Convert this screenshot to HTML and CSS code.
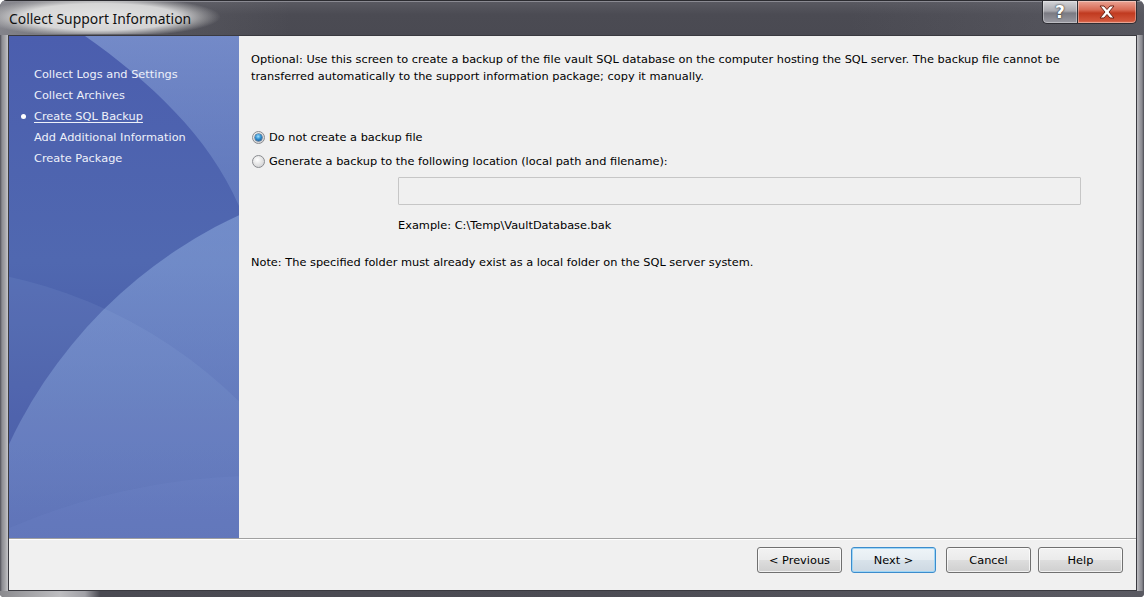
FILE: index.html
```html
<!DOCTYPE html>
<html>
<head>
<meta charset="utf-8">
<link rel="stylesheet" href="styles.css">
</head>
<body>
<div class="window">
  <div class="titlebar">
    <div class="title-glow"><span class="title">Collect Support Information</span></div>
    <div class="caption-buttons">
      <div class="cap-btn cap-help"><span>?</span></div>
      <div class="cap-btn cap-close">
        <svg width="22" height="16" viewBox="0 0 22 16"><path d="M4 2 L8 2 L11 5.5 L14 2 L18 2 L13 8 L18 14 L14 14 L11 10.5 L8 14 L4 14 L9 8 Z" fill="#ffffff" stroke="#6b2418" stroke-width="1" stroke-linejoin="round"/></svg>
      </div>
    </div>
  </div>
  <div class="frame-mid">
    <div class="frame-left"></div>
    <div class="client">
      <div class="main">
        <div class="sidebar">
          <svg class="sidebar-art" width="230" height="502" viewBox="0 0 230 502" preserveAspectRatio="none">
            <defs>
              <linearGradient id="base" x1="0" y1="0" x2="0" y2="1">
                <stop offset="0" stop-color="#4b5eae"/>
                <stop offset="0.45" stop-color="#5068b0"/>
                <stop offset="1" stop-color="#3e4d9d"/>
              </linearGradient>
              <linearGradient id="bigc" x1="0" y1="0" x2="0" y2="1">
                <stop offset="0" stop-color="#9ab8e6" stop-opacity="0.5"/>
                <stop offset="0.6" stop-color="#7f9ad8" stop-opacity="0.25"/>
                <stop offset="1" stop-color="#6f86cc" stop-opacity="0.05"/>
              </linearGradient>
              <linearGradient id="topr" x1="0" y1="0" x2="0" y2="1">
                <stop offset="0" stop-color="#9cb6e2" stop-opacity="0.5"/>
                <stop offset="1" stop-color="#8aa6da" stop-opacity="0.3"/>
              </linearGradient>
            </defs>
            <rect width="230" height="502" fill="url(#base)"/>
            <path d="M76 0 C 140 45, 200 100, 230 170 L 230 0 Z" fill="url(#topr)"/>
            <circle cx="430" cy="610" r="475" fill="url(#bigc)"/>
            <circle cx="-100" cy="700" r="470" fill="#a8c0ee" fill-opacity="0.10"/>
            <path d="M0 492 Q 110 445 230 440 L230 502 L0 502 Z" fill="#8ea4e0" fill-opacity="0.08"/>
          </svg>
          <ul class="nav">
            <li>Collect Logs and Settings</li>
            <li>Collect Archives</li>
            <li class="current">Create SQL Backup</li>
            <li>Add Additional Information</li>
            <li>Create Package</li>
          </ul>
        </div>
        <div class="content">
          <p class="intro">Optional: Use this screen to create a backup of the file vault SQL database on the computer hosting the SQL server. The backup file cannot be transferred automatically to the support information package; copy it manually.</p>
          <div class="options">
            <div class="radio-row"><span class="radio checked"></span><span>Do not create a backup file</span></div>
            <div class="radio-row"><span class="radio"></span><span>Generate a backup to the following location (local path and filename):</span></div>
          </div>
          <div class="path-block">
            <div class="path-input"></div>
            <div class="example">Example: C:\Temp\VaultDatabase.bak</div>
          </div>
          <p class="note">Note: The specified folder must already exist as a local folder on the SQL server system.</p>
        </div>
      </div>
      <div class="button-bar">
        <div class="btn">&lt; Previous</div>
        <div class="btn btn-default">Next &gt;</div>
        <div class="btn btn-cancel">Cancel</div>
        <div class="btn">Help</div>
      </div>
    </div>
    <div class="frame-right"></div>
  </div>
  <div class="frame-bottom"></div>
</div>
</body>
</html>
```
FILE: styles.css
```css
html, body {
  margin: 0;
  padding: 0;
  background: #ffffff;
}
.window {
  width: 1144px;
  height: 597px;
  display: flex;
  flex-direction: column;
  overflow: hidden;
  border-radius: 7px 7px 4px 4px;
  background: #4d4d56;
  font-family: "DejaVu Sans", sans-serif;
  font-size: 11.35px;
  color: #000;
}
.titlebar {
  height: 35px;
  flex: none;
  display: flex;
  justify-content: space-between;
  align-items: flex-start;
  box-sizing: border-box;
  border-top: 1px solid #2b2b30;
  background:
    linear-gradient(90deg, rgba(170,170,176,0.6) 0px, rgba(120,120,126,0.25) 160px, rgba(0,0,0,0) 290px, rgba(0,0,0,0) 850px, rgba(110,110,118,0.35) 1144px),
    linear-gradient(180deg, #5a5a62 0%, #4b4b53 40%, #4a4a52 100%);
  box-shadow: inset 0 1px 0 #8a8a92;
}
.title-glow {
  padding: 8px 49px 0 9px;
  height: 33px;
  box-sizing: border-box;
  background: radial-gradient(ellipse 50% 62% at 42% 48%, rgba(232,232,232,0.97) 0%, rgba(224,224,224,0.9) 65%, rgba(200,200,200,0.45) 85%, rgba(200,200,200,0) 100%);
}
.title {
  font-family: "Noto Sans", "DejaVu Sans", sans-serif;
  font-size: 13.9px;
  color: #111;
  white-space: nowrap;
}
.caption-buttons {
  display: flex;
  margin-right: 7px;
}
.cap-btn {
  height: 23px;
  box-sizing: border-box;
  border: 1px solid #2e2e34;
  border-top: none;
  display: flex;
  align-items: center;
  justify-content: center;
  box-shadow: inset 0 0 0 1px rgba(255,255,255,0.35);
}
.cap-help {
  width: 35px;
  border-radius: 0 0 0 5px;
  background: linear-gradient(180deg, #d4d4d8 0%, #a8a8ae 45%, #7a7a82 55%, #9a9aa2 100%);
  border-right: none;
}
.cap-help span {
  font-family: "DejaVu Sans", sans-serif;
  font-weight: bold;
  font-size: 17px;
  color: #fff;
  text-shadow: 0 0 1px #333, 0 0 2px #333;
  line-height: 1;
}
.cap-close {
  width: 60px;
  border-radius: 0 0 5px 0;
  background: linear-gradient(180deg, #eba495 0%, #d86a54 40%, #c03a20 55%, #d2553a 90%, #e07a60 100%);
}
.frame-mid {
  flex: 1;
  display: flex;
  min-height: 0;
}
.frame-left {
  width: 8px;
  flex: none;
  background: linear-gradient(90deg, #505058 0px, #8c8c92 2px, #a4a4a8 5px, #c4c4c8 8px);
}
.frame-right {
  width: 7px;
  flex: none;
  background: linear-gradient(90deg, #c0c0c4 0px, #9a9aa0 3px, #8a8a90 5px, #4a4a52 7px);
}
.frame-bottom {
  height: 6px;
  flex: none;
  background: linear-gradient(90deg, #8a8a8e 0px, #bdbdc0 60px, #a0a0a6 85px, #4a4a52 100px, #4c4c54 600px, #5a5a62 1144px);
}
.client {
  flex: 1;
  display: flex;
  flex-direction: column;
  border: 1px solid #3a3a40;
  background: #f0f0f0;
  min-width: 0;
}
.main {
  flex: 1;
  display: flex;
  min-height: 0;
}
.sidebar {
  width: 230px;
  flex: none;
  position: relative;
  overflow: hidden;
}
.sidebar-art {
  position: absolute;
  left: 0;
  top: 0;
  display: block;
}
.nav {
  position: relative;
  list-style: none;
  margin: 0;
  padding: 28px 0 0 25px;
  color: #eef1fa;
  line-height: 21px;
}
.nav li {
  position: relative;
  white-space: nowrap;
}
.nav li.current {
  text-decoration: underline;
  text-underline-offset: 2px;
}
.nav li.current::before {
  content: "";
  position: absolute;
  left: -13px;
  top: 8px;
  width: 5px;
  height: 5px;
  border-radius: 50%;
  background: #ffffff;
}
.content {
  flex: 1;
  padding: 15px 12px 0 12px;
  min-width: 0;
}
.intro {
  margin: 0;
  line-height: 17px;
  max-width: 850px;
}
.options {
  margin-top: 40px;
  display: flex;
  flex-direction: column;
}
.radio-row {
  height: 24px;
  display: flex;
  align-items: center;
  gap: 4px;
  white-space: nowrap;
}
.radio {
  width: 13px;
  height: 13px;
  flex: none;
  box-sizing: border-box;
  border-radius: 50%;
  border: 1px solid #8a8c90;
  background: radial-gradient(circle at 40% 35%, #ffffff 0%, #e6e6e6 45%, #c8c8cc 100%);
  position: relative;
  margin-left: 1px;
}
.radio.checked::after {
  content: "";
  position: absolute;
  left: 2px;
  top: 2px;
  width: 7px;
  height: 7px;
  border-radius: 50%;
  background: radial-gradient(circle at 45% 35%, #9fe0ff 0%, #2f8fd0 45%, #0d3f7a 100%);
  box-shadow: 0 0 0 0.5px #123e6a;
}
.path-block {
  padding-left: 147px;
}
.path-input {
  width: 683px;
  height: 28px;
  box-sizing: border-box;
  margin-top: 4px;
  border: 1px solid #c6c6c6;
  border-radius: 1px;
  background: #f0f0f0;
}
.example {
  margin-top: 12px;
  line-height: 17px;
}
.note {
  margin: 20px 0 0 0;
  line-height: 17px;
}
.button-bar {
  flex: none;
  border-top: 1px solid #a0a0a0;
  box-shadow: inset 0 1px 0 #ffffff;
  display: flex;
  justify-content: flex-end;
  align-items: flex-start;
  padding: 8px 13px 0 0;
  gap: 9px;
  box-sizing: border-box;
  height: 52px;
}
.btn {
  width: 85px;
  height: 26px;
  box-sizing: border-box;
  border: 1px solid #707070;
  border-radius: 3px;
  background: linear-gradient(180deg, #f2f2f2 0%, #ebebeb 48%, #dddddd 52%, #cfcfcf 100%);
  box-shadow: inset 0 0 0 1px rgba(255,255,255,0.7);
  display: flex;
  align-items: center;
  justify-content: center;
}
.btn-default {
  border-color: #3c8ccc;
  box-shadow: inset 0 0 0 1px #9fd6f6;
  background: linear-gradient(180deg, #eef4f8 0%, #e6edf2 48%, #d8e2ea 52%, #cdd8e2 100%);
}
.btn-cancel {
  margin-left: 1px;
  margin-right: -2px;
}
```
